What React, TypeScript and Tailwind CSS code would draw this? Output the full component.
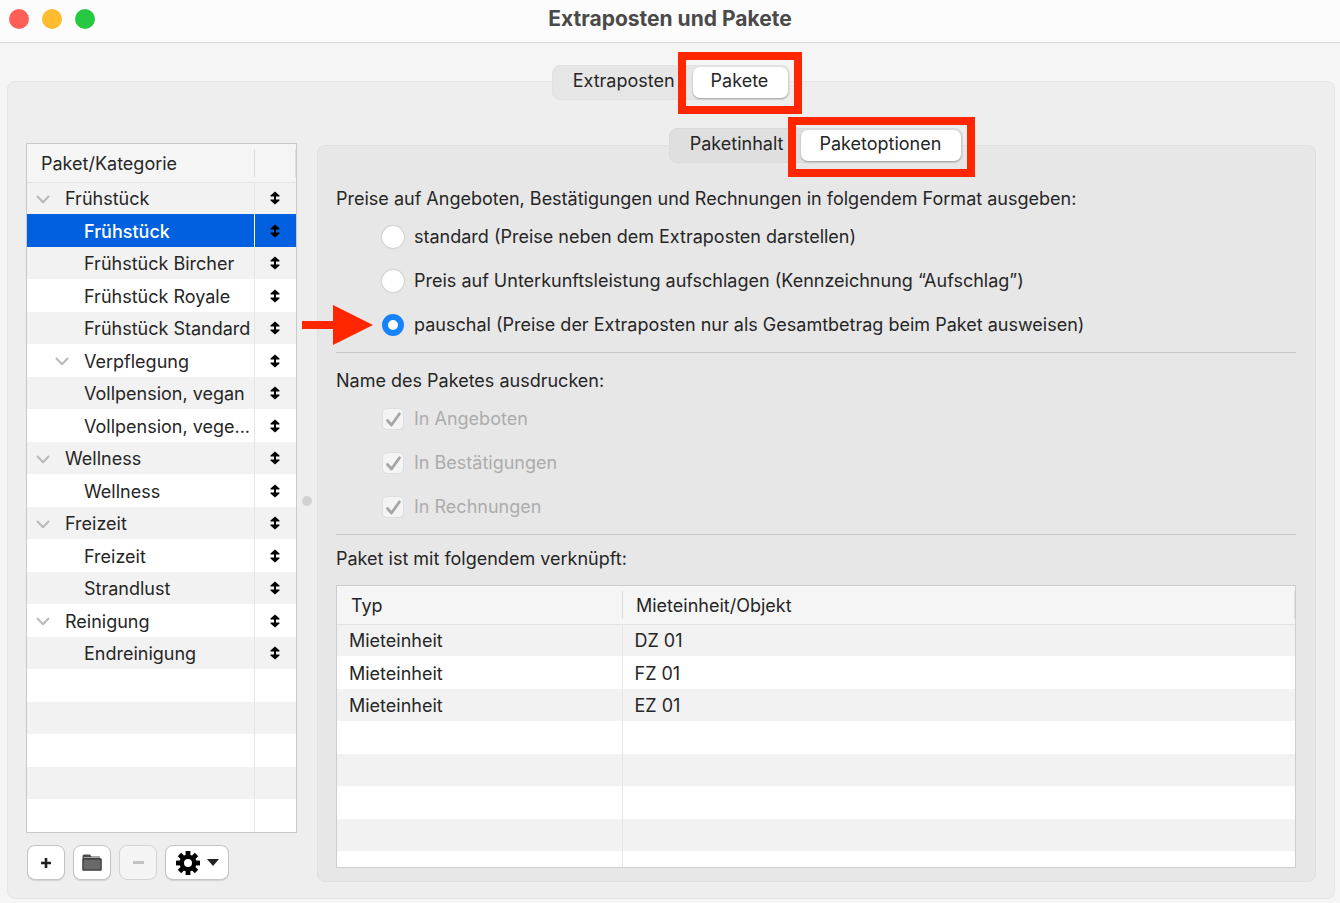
import React from "react";

type Row = { label: string; level: 0 | 1; open?: boolean; selected?: boolean };

const rows: Row[] = [
  { label: "Frühstück", level: 0, open: true },
  { label: "Frühstück", level: 1, selected: true },
  { label: "Frühstück Bircher", level: 1 },
  { label: "Frühstück Royale", level: 1 },
  { label: "Frühstück Standard", level: 1 },
  { label: "Verpflegung", level: 1, open: true },
  { label: "Vollpension, vegan", level: 1 },
  { label: "Vollpension, vege...", level: 1 },
  { label: "Wellness", level: 0, open: true },
  { label: "Wellness", level: 1 },
  { label: "Freizeit", level: 0, open: true },
  { label: "Freizeit", level: 1 },
  { label: "Strandlust", level: 1 },
  { label: "Reinigung", level: 0, open: true },
  { label: "Endreinigung", level: 1 },
];

const links = [
  ["Mieteinheit", "DZ 01"],
  ["Mieteinheit", "FZ 01"],
  ["Mieteinheit", "EZ 01"],
];

const formats = [
  "standard (Preise neben dem Extraposten darstellen)",
  "Preis auf Unterkunftsleistung aufschlagen (Kennzeichnung “Aufschlag”)",
  "pauschal (Preise der Extraposten nur als Gesamtbetrag beim Paket ausweisen)",
];

const prints = ["In Angeboten", "In Bestätigungen", "In Rechnungen"];

const rowClass = "odd:h-8 even:h-[33px] odd:bg-[#f2f2f2] even:bg-white";
const toolClass =
  "flex h-[35px] items-center justify-center rounded-lg border border-[#c4c4c4] bg-white shadow-[0_1px_1px_rgba(0,0,0,0.12)]";

function Chevron() {
  return (
    <svg width="14" height="9" viewBox="0 0 14 9" fill="none" stroke="#b9b9b9" strokeWidth="2" strokeLinecap="round" strokeLinejoin="round">
      <path d="M1.5 1.5 7 7.3 12.5 1.5" />
    </svg>
  );
}

function MoveIcon() {
  return (
    <svg className="mx-auto" width="10" height="14" viewBox="0 0 10 14" fill="#000">
      <path d="M5 .5 9.5 4.4V5.4H6V8.6H9.5V9.6L5 13.5 .5 9.6V8.6H4V5.4H.5V4.4Z" />
    </svg>
  );
}

function Gear() {
  return (
    <svg width="24" height="24" viewBox="-12 -12 24 24" fill="#000">
      {[0, 45, 90, 135].map((a) => (
        <rect key={a} x="-2.4" y="-12" width="4.8" height="24" transform={`rotate(${a})`} />
      ))}
      <circle r="8.6" />
      <circle r="4" fill="#fff" />
    </svg>
  );
}

function Marker({ className }: { className: string }) {
  return <span aria-hidden="true" className={`pointer-events-none absolute border-8 border-[#ff2600] ${className}`} />;
}

function Tabs({ first, second, className, marker }: { first: string; second: string; className: string; marker: string }) {
  return (
    <div role="tablist" className={`flex h-[35px] self-center rounded-lg border p-px ${className}`}>
      <button role="tab" aria-selected="false" className="flex items-center pr-[18px] pb-1 pl-[19px]">
        {first}
      </button>
      <button
        role="tab"
        aria-selected="true"
        className="relative flex items-center rounded-[7px] bg-white pr-5 pb-1 pl-[18px] shadow-[0_1px_2px_rgba(0,0,0,0.3)]"
      >
        {second}
        <Marker className={marker} />
      </button>
    </div>
  );
}

export default function App() {
  return (
    <main className="flex min-h-screen flex-col bg-[#f5f5f5] font-['Inter','Liberation_Sans',sans-serif] text-lg leading-6 text-[#262626]">
      <header className="relative flex h-[43px] items-center justify-center border-b border-[#dadada] bg-[#fcfcfc] pb-[5px]">
        <div className="absolute left-[9px] flex gap-[13px]">
          <button aria-label="Schließen" className="size-5 rounded-full bg-[#ff5f57]" />
          <button aria-label="Minimieren" className="size-5 rounded-full bg-[#febc2e]" />
          <button aria-label="Maximieren" className="size-5 rounded-full bg-[#28c840]" />
        </div>
        <h1 className="text-[21px] font-bold text-[#4a4a4a]">Extraposten und Pakete</h1>
      </header>

      <div className="flex flex-1 flex-col pt-[38px] pr-[5px] pb-1 pl-[7px]">
        <section className="flex flex-1 flex-col rounded-lg border border-[#e5e5e5] bg-[#eeeeee] px-[18px] pb-4">
          <Tabs
            first="Extraposten"
            second="Pakete"
            className="-mt-[17px] border-[#e2e2e2] bg-[#e6e6e6]"
            marker="-top-[15px] -right-[14px] -bottom-4 -left-[15px]"
          />

          <div className="mt-[43px] flex flex-1">
            <div className="flex w-[271px] shrink-0 flex-col">
              <div className="border border-[#c9c9c9] bg-white">
                <table className="w-full table-fixed">
                  <thead>
                    <tr className="h-[38px] border-b border-[#e2e2e2] bg-[#f5f5f5]">
                      <th className="pt-[2px] pb-0 pl-[14px] text-left font-normal">Paket/Kategorie</th>
                      <th className="w-[42px] py-1">
                        <div className="h-7 border-x border-[#dedede]" />
                      </th>
                    </tr>
                  </thead>
                  <tbody>
                    {Array.from({ length: 20 }, (_, i) => {
                      const row = rows[i];
                      return (
                        <tr key={i} className={row?.selected ? "h-[33px] bg-[#0060df] font-medium text-white" : rowClass}>
                          <td className="p-0 pt-[2px] whitespace-nowrap">
                            {row && (
                              <div className={`flex items-center ${row.level ? "pl-[28px]" : "pl-[9px]"}`}>
                                <span className="flex w-[29px] shrink-0">{row.open && <Chevron />}</span>
                                {row.label}
                              </div>
                            )}
                          </td>
                          <td className={row?.selected ? "border-l border-white p-0" : "border-l border-[#e6e6e6] p-0"}>
                            {row && <MoveIcon />}
                          </td>
                        </tr>
                      );
                    })}
                  </tbody>
                </table>
              </div>
              <div className="mt-3 flex gap-2 px-px">
                <button aria-label="Hinzufügen" className={`w-[38px] ${toolClass}`}>
                  <svg width="10" height="10" viewBox="0 0 10 10" stroke="#222" strokeWidth="2.6">
                    <path d="M5 0V10M0 5H10" />
                  </svg>
                </button>
                <button aria-label="Neue Kategorie" className={`w-[38px] ${toolClass}`}>
                  <svg width="20" height="17" viewBox="0 0 20 17">
                    <path d="M.5 16.5V2Q.5.5 2 .5H8L9.5 2.5H18V4.5H19.5V16.5Z" fill="#4a4a4a" />
                    <path d="M2 3.5H18" stroke="#aaa" />
                    <path d="M1 5H19V16H1Z" fill="#696969" stroke="#333" />
                  </svg>
                </button>
                <button aria-label="Entfernen" disabled className="flex h-[35px] w-[38px] items-center justify-center rounded-lg border border-[#d4d4d4] bg-[#f4f4f4]">
                  <svg width="11" height="3" viewBox="0 0 11 3">
                    <path d="M0 0H11V3H0Z" fill="#c2c2c2" />
                  </svg>
                </button>
                <button aria-label="Aktionen" className={`w-16 gap-[7px] ${toolClass}`}>
                  <Gear />
                  <svg width="12" height="7" viewBox="0 0 12 7">
                    <path d="M0 0H12L6 7Z" fill="#222" />
                  </svg>
                </button>
              </div>
            </div>

            <div className="flex w-5 shrink-0 items-center justify-center pb-[23px]">
              <span className="size-[10px] rounded-full bg-[#d2d2d2]" />
            </div>

            <section className="mt-[2px] flex min-w-0 flex-1 flex-col rounded-lg border border-[#e0e0e0] bg-[#e7e7e7] pr-[19px] pb-[13px] pl-[18px]">
              <Tabs
                first="Paketinhalt"
                second="Paketoptionen"
                className="-mt-[18px] border-[#dadada] bg-[#dfdfdf]"
                marker="-top-[13px] -right-[14px] -bottom-4 -left-[13px]"
              />

              <fieldset className="mt-6">
                <legend>Preise auf Angeboten, Bestätigungen und Rechnungen in folgendem Format ausgeben:</legend>
                <div className="mt-1 pl-[46px]">
                  {formats.map((label, i) => (
                    <label key={label} className="relative flex h-11 items-center gap-[10px]">
                      <input
                        type="radio"
                        name="format"
                        defaultChecked={i === 2}
                        className="size-[22px] shrink-0 appearance-none rounded-full bg-white shadow-[0_0_2px_rgba(0,0,0,0.3)] checked:border-[6px] checked:border-[#1683fb] checked:shadow-none"
                      />
                      {label}
                      {i === 2 && (
                        <svg aria-hidden="true" className="absolute -left-20" width="72" height="40" viewBox="0 0 72 40">
                          <path d="M0 16H31V0L71 20 31 40V24H0Z" fill="#ff2600" />
                        </svg>
                      )}
                    </label>
                  ))}
                </div>
              </fieldset>

              <hr className="mt-[5px] border-[#c9c9c9]" />

              <fieldset className="mt-4">
                <legend>Name des Paketes ausdrucken:</legend>
                <div className="mt-1 pl-[46px] text-[#acacac]">
                  {prints.map((label) => (
                    <label key={label} className="relative flex h-11 items-center gap-[10px]">
                      <input
                        type="checkbox"
                        defaultChecked
                        disabled
                        className="size-[22px] shrink-0 appearance-none rounded-[5px] border border-[#dedede] bg-[#f4f4f4]"
                      />
                      <svg className="absolute left-1" width="15" height="15" viewBox="0 0 15 15" fill="none" stroke="#a6a6a6" strokeWidth="2.8" strokeLinecap="round" strokeLinejoin="round">
                        <path d="M1.5 8.5 5.5 13 13.5 1.8" />
                      </svg>
                      {label}
                    </label>
                  ))}
                </div>
              </fieldset>

              <hr className="mt-[5px] border-[#c9c9c9]" />

              <h2 className="mt-3">Paket ist mit folgendem verknüpft:</h2>
              <div className="mt-[14px] min-h-0 flex-1 basis-0 overflow-hidden border border-[#cdcdcd] bg-white">
                <table className="w-full table-fixed">
                  <thead>
                    <tr className="h-[38px] border-b border-[#e2e2e2] bg-[#f5f5f5]">
                      <th className="w-[285px] pt-[2px] pb-0 pl-[14px] text-left font-normal">Typ</th>
                      <th className="py-1 text-left font-normal">
                        <div className="flex h-7 items-center border-x border-[#dedede] pt-[2px] pl-[13px]">Mieteinheit/Objekt</div>
                      </th>
                    </tr>
                  </thead>
                  <tbody>
                    {Array.from({ length: 8 }, (_, i) => (
                      <tr key={i} className={rowClass}>
                        <td className="p-0 pt-[2px] pl-3">{links[i]?.[0]}</td>
                        <td className="border-l border-[#e6e6e6] p-0 pt-[2px] pl-3">{links[i]?.[1]}</td>
                      </tr>
                    ))}
                  </tbody>
                </table>
              </div>
            </section>
          </div>
        </section>
      </div>
    </main>
  );
}
